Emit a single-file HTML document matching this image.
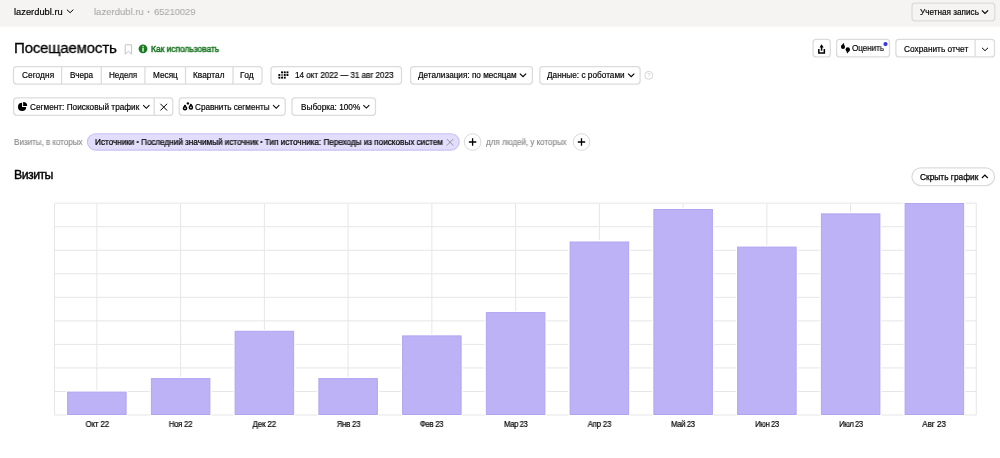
<!DOCTYPE html>
<html><head><meta charset="utf-8"><style>
html,body{margin:0;padding:0;background:#fff;width:1000px;height:458px;overflow:hidden;position:relative}
.t{position:absolute;white-space:nowrap;line-height:1;font-family:"Liberation Sans", sans-serif;will-change:transform;transform-origin:0 0}
.b{position:absolute}
</style></head><body>
<svg class="b" style="left:0;top:0" width="1000" height="458" viewBox="0 0 1000 458"><rect x="0" y="0" width="1000" height="26.7" fill="#f5f4f2"/><path d="M66.90 9.70 L70.10 12.70 L73.30 9.70" fill="none" stroke="#000" stroke-width="1.0"/><circle cx="148.5" cy="11.7" r="0.95" fill="#a9a9a9"/><rect x="912.00" y="3.00" width="82.80" height="17.80" rx="3" fill="#f5f4f2" stroke="#dbdbdb" stroke-width="1.25"/><path d="M981.90 10.40 L985.00 13.50 L988.10 10.40" fill="none" stroke="#000" stroke-width="1.15"/><g transform="translate(124.00,44.00)"><path d="M1.2 0.8 H7.6 V10.2 L4.4 7.3 L1.2 10.2 Z" fill="none" stroke="#c4c4c4" stroke-width="1"/></g><g transform="translate(138.50,44.30)"><circle cx="4.5" cy="4.5" r="4.4" fill="#1a7a22"/><rect x="3.9" y="3.7" width="1.3" height="3.6" fill="#fff"/><circle cx="4.55" cy="2.4" r="0.75" fill="#fff"/></g><rect x="813.10" y="39.40" width="17.20" height="17.50" rx="3" fill="#fff" stroke="#dbdbdb" stroke-width="1.25"/><g transform="translate(812.00,38.00)"><path d="M6.85 10.9 V14.95 H12.35 V10.9" fill="none" stroke="#000" stroke-width="1.5"/><path d="M9.6 9 V12.7" stroke="#000" stroke-width="1.5"/><path d="M9.6 6.2 L7.5 9.6 H11.7 Z" fill="#000"/></g><rect x="836.60" y="39.40" width="52.90" height="17.50" rx="3" fill="#fff" stroke="#dbdbdb" stroke-width="1.25"/><g transform="translate(838.00,41.00)"><circle cx="5" cy="5.9" r="2.05" fill="#000"/><path d="M3.1 5.2 L5.5 2.0 L6.3 3.0 L5.6 4.3 Z" fill="#000"/><circle cx="9.8" cy="8.5" r="2.2" fill="#000"/><path d="M12.0 8.6 L9.4 12.5 L8.6 11.6 L9.4 10.2 Z" fill="#000"/></g><circle cx="885.5" cy="44.1" r="2.1" fill="#3737e6"/><rect x="895.90" y="39.40" width="98.60" height="17.50" rx="3" fill="#fff" stroke="#dbdbdb" stroke-width="1.25"/><rect x="974.48" y="39.40" width="1.25" height="17.50" fill="#dbdbdb"/><path d="M982.00 47.80 L985.00 50.70 L988.00 47.80" fill="none" stroke="#000" stroke-width="1.0"/><rect x="13.50" y="66.60" width="248.50" height="17.40" rx="3" fill="#fff" stroke="#dbdbdb" stroke-width="1.25"/><rect x="60.98" y="66.60" width="1.25" height="17.40" fill="#dbdbdb"/><rect x="100.67" y="66.60" width="1.25" height="17.40" fill="#dbdbdb"/><rect x="144.28" y="66.60" width="1.25" height="17.40" fill="#dbdbdb"/><rect x="184.88" y="66.60" width="1.25" height="17.40" fill="#dbdbdb"/><rect x="232.38" y="66.60" width="1.25" height="17.40" fill="#dbdbdb"/><rect x="271.00" y="66.60" width="130.50" height="17.40" rx="3" fill="#fff" stroke="#dbdbdb" stroke-width="1.25"/><g transform="translate(278.40,71.40)"><rect x="2.70" y="0.00" width="1.9" height="1.9" fill="#000" opacity="1"/><rect x="5.40" y="0.00" width="1.9" height="1.9" fill="#000" opacity="1"/><rect x="8.10" y="0.00" width="1.9" height="1.9" fill="#000" opacity="1"/><rect x="0.00" y="2.65" width="1.9" height="1.9" fill="#000" opacity="1"/><rect x="2.70" y="2.65" width="1.9" height="1.9" fill="#000" opacity="0.55"/><rect x="5.40" y="2.65" width="1.9" height="1.9" fill="#000" opacity="1"/><rect x="8.10" y="2.65" width="1.9" height="1.9" fill="#000" opacity="1"/><rect x="0.00" y="5.30" width="1.9" height="1.9" fill="#000" opacity="1"/><rect x="2.70" y="5.30" width="1.9" height="1.9" fill="#000" opacity="1"/><rect x="5.40" y="5.30" width="1.9" height="1.9" fill="#000" opacity="1"/></g><rect x="410.60" y="66.60" width="121.80" height="17.40" rx="3" fill="#fff" stroke="#dbdbdb" stroke-width="1.25"/><path d="M519.90 73.60 L523.00 76.70 L526.10 73.60" fill="none" stroke="#000" stroke-width="1.15"/><rect x="539.80" y="66.60" width="100.30" height="17.40" rx="3" fill="#fff" stroke="#dbdbdb" stroke-width="1.25"/><path d="M628.10 73.60 L631.20 76.70 L634.30 73.60" fill="none" stroke="#000" stroke-width="1.15"/><g transform="translate(644.00,70.50)"><circle cx="4.8" cy="4.8" r="4" fill="none" stroke="#d0d0d0" stroke-width="0.9"/><text x="4.8" y="6.9" font-size="5.5" text-anchor="middle" fill="#c8c8c8" font-family="Liberation Sans">?</text></g><rect x="13.70" y="97.90" width="159.10" height="17.40" rx="3" fill="#fff" stroke="#dbdbdb" stroke-width="1.25"/><rect x="153.57" y="97.90" width="1.25" height="17.40" fill="#dbdbdb"/><g transform="translate(17.00,101.00)"><path d="M5.1 1.8 V5.9 H9.2 A4.1 4.1 0 1 1 5.1 1.8 Z" fill="#000"/><path d="M6.1 0.95 A4.1 4.1 0 0 1 10.2 5.05 H6.1 Z" fill="#000"/></g><path d="M143.20 105.20 L146.30 108.30 L149.40 105.20" fill="none" stroke="#000" stroke-width="1.05"/><g transform="translate(159.00,102.50)"><path d="M1.4 1.3 L8.1 8.0 M8.1 1.3 L1.4 8.0" stroke="#000" stroke-width="1"/></g><rect x="179.20" y="97.90" width="106.00" height="17.40" rx="3" fill="#fff" stroke="#dbdbdb" stroke-width="1.25"/><g transform="translate(182.00,101.00)"><circle cx="3" cy="7.3" r="1.55" fill="none" stroke="#000" stroke-width="1.5"/><circle cx="8.9" cy="6.4" r="1.55" fill="none" stroke="#000" stroke-width="1.5"/><circle cx="3" cy="4.8" r="1.05" fill="#000"/><circle cx="8.9" cy="3.9" r="1.05" fill="#000"/><circle cx="5.9" cy="2.4" r="1.2" fill="#000"/></g><path d="M273.10 105.20 L276.20 108.30 L279.30 105.20" fill="none" stroke="#000" stroke-width="1.05"/><rect x="292.00" y="97.90" width="83.50" height="17.40" rx="3" fill="#fff" stroke="#dbdbdb" stroke-width="1.25"/><path d="M363.40 105.20 L366.35 108.10 L369.30 105.20" fill="none" stroke="#000" stroke-width="1.05"/><rect x="87.40" y="133.70" width="371.80" height="16.40" rx="8.2" fill="#e1ddfb" stroke="#c9c1f5" stroke-width="1.1"/><g transform="translate(446.30,138.50)"><path d="M0.5 0.5 L7 7 M7 0.5 L0.5 7" stroke="#8c8c9c" stroke-width="0.9"/></g><g transform="translate(463.60,133.00)"><circle cx="9" cy="9" r="8.3" fill="#fff" stroke="#d9d9d9" stroke-width="1"/><path d="M9 5.3 V12.7 M5.3 9 H12.7" stroke="#000" stroke-width="1.3"/></g><g transform="translate(572.50,133.00)"><circle cx="9" cy="9" r="8.3" fill="#fff" stroke="#d9d9d9" stroke-width="1"/><path d="M9 5.3 V12.7 M5.3 9 H12.7" stroke="#000" stroke-width="1.3"/></g><rect x="911.90" y="167.80" width="82.70" height="17.80" rx="8.9" fill="#fff" stroke="#dbdbdb" stroke-width="1.25"/><path d="M981.90 178.00 L984.85 175.00 L987.80 178.00" fill="none" stroke="#000" stroke-width="1.15"/><line x1="54.5" x2="976.25" y1="203.20" y2="203.20" stroke="#e6e6e6" stroke-width="1"/><line x1="54.5" x2="976.25" y1="226.73" y2="226.73" stroke="#e6e6e6" stroke-width="1"/><line x1="54.5" x2="976.25" y1="250.27" y2="250.27" stroke="#e6e6e6" stroke-width="1"/><line x1="54.5" x2="976.25" y1="273.80" y2="273.80" stroke="#e6e6e6" stroke-width="1"/><line x1="54.5" x2="976.25" y1="297.33" y2="297.33" stroke="#e6e6e6" stroke-width="1"/><line x1="54.5" x2="976.25" y1="320.87" y2="320.87" stroke="#e6e6e6" stroke-width="1"/><line x1="54.5" x2="976.25" y1="344.40" y2="344.40" stroke="#e6e6e6" stroke-width="1"/><line x1="54.5" x2="976.25" y1="367.93" y2="367.93" stroke="#e6e6e6" stroke-width="1"/><line x1="54.5" x2="976.25" y1="391.47" y2="391.47" stroke="#e6e6e6" stroke-width="1"/><line x1="54.5" x2="976.25" y1="415.00" y2="415.00" stroke="#e6e6e6" stroke-width="1"/><line x1="96.88" x2="96.88" y1="203.2" y2="415.0" stroke="#e6e6e6" stroke-width="1"/><line x1="180.62" x2="180.62" y1="203.2" y2="415.0" stroke="#e6e6e6" stroke-width="1"/><line x1="264.38" x2="264.38" y1="203.2" y2="415.0" stroke="#e6e6e6" stroke-width="1"/><line x1="348.12" x2="348.12" y1="203.2" y2="415.0" stroke="#e6e6e6" stroke-width="1"/><line x1="431.88" x2="431.88" y1="203.2" y2="415.0" stroke="#e6e6e6" stroke-width="1"/><line x1="515.62" x2="515.62" y1="203.2" y2="415.0" stroke="#e6e6e6" stroke-width="1"/><line x1="599.38" x2="599.38" y1="203.2" y2="415.0" stroke="#e6e6e6" stroke-width="1"/><line x1="683.12" x2="683.12" y1="203.2" y2="415.0" stroke="#e6e6e6" stroke-width="1"/><line x1="766.88" x2="766.88" y1="203.2" y2="415.0" stroke="#e6e6e6" stroke-width="1"/><line x1="850.62" x2="850.62" y1="203.2" y2="415.0" stroke="#e6e6e6" stroke-width="1"/><line x1="934.38" x2="934.38" y1="203.2" y2="415.0" stroke="#e6e6e6" stroke-width="1"/><line x1="54.5" x2="54.5" y1="203.2" y2="415.0" stroke="#e6e6e6" stroke-width="1"/><line x1="976.25" x2="976.25" y1="203.2" y2="415.0" stroke="#e6e6e6" stroke-width="1"/><rect x="67.12" y="391.6" width="59.5" height="23.40" fill="#bdb2f5" stroke="#fff" stroke-width="2.4"/><rect x="67.62" y="392.1" width="58.5" height="22.40" fill="#bdb2f5" stroke="#b1a5f3" stroke-width="1"/><rect x="150.88" y="378.1" width="59.5" height="36.90" fill="#bdb2f5" stroke="#fff" stroke-width="2.4"/><rect x="151.38" y="378.6" width="58.5" height="35.90" fill="#bdb2f5" stroke="#b1a5f3" stroke-width="1"/><rect x="234.62" y="330.8" width="59.5" height="84.20" fill="#bdb2f5" stroke="#fff" stroke-width="2.4"/><rect x="235.12" y="331.3" width="58.5" height="83.20" fill="#bdb2f5" stroke="#b1a5f3" stroke-width="1"/><rect x="318.38" y="378.1" width="59.5" height="36.90" fill="#bdb2f5" stroke="#fff" stroke-width="2.4"/><rect x="318.88" y="378.6" width="58.5" height="35.90" fill="#bdb2f5" stroke="#b1a5f3" stroke-width="1"/><rect x="402.12" y="335.4" width="59.5" height="79.60" fill="#bdb2f5" stroke="#fff" stroke-width="2.4"/><rect x="402.62" y="335.9" width="58.5" height="78.60" fill="#bdb2f5" stroke="#b1a5f3" stroke-width="1"/><rect x="485.88" y="312.1" width="59.5" height="102.90" fill="#bdb2f5" stroke="#fff" stroke-width="2.4"/><rect x="486.38" y="312.6" width="58.5" height="101.90" fill="#bdb2f5" stroke="#b1a5f3" stroke-width="1"/><rect x="569.62" y="241.5" width="59.5" height="173.50" fill="#bdb2f5" stroke="#fff" stroke-width="2.4"/><rect x="570.12" y="242.0" width="58.5" height="172.50" fill="#bdb2f5" stroke="#b1a5f3" stroke-width="1"/><rect x="653.38" y="209.0" width="59.5" height="206.00" fill="#bdb2f5" stroke="#fff" stroke-width="2.4"/><rect x="653.88" y="209.5" width="58.5" height="205.00" fill="#bdb2f5" stroke="#b1a5f3" stroke-width="1"/><rect x="737.12" y="246.6" width="59.5" height="168.40" fill="#bdb2f5" stroke="#fff" stroke-width="2.4"/><rect x="737.62" y="247.1" width="58.5" height="167.40" fill="#bdb2f5" stroke="#b1a5f3" stroke-width="1"/><rect x="820.88" y="213.4" width="59.5" height="201.60" fill="#bdb2f5" stroke="#fff" stroke-width="2.4"/><rect x="821.38" y="213.9" width="58.5" height="200.60" fill="#bdb2f5" stroke="#b1a5f3" stroke-width="1"/><rect x="904.62" y="203" width="59.5" height="212.00" fill="#bdb2f5" stroke="#fff" stroke-width="2.4"/><rect x="905.12" y="203.5" width="58.5" height="211.00" fill="#bdb2f5" stroke="#b1a5f3" stroke-width="1"/></svg>
<div class="t" style="left:14.00px;top:7.53px;font-size:9.3px;color:#000;font-weight:400;-webkit-text-stroke-width:0.18px;letter-spacing:0.005px;transform:scaleX(1.0013)">lazerdubl.ru</div>
<div class="t" style="left:93.60px;top:7.27px;font-size:9.6px;color:#a9a9a9;font-weight:400;-webkit-text-stroke-width:0.08px;letter-spacing:-0.018px;transform:scaleX(0.9956)">lazerdubl.ru</div>
<div class="t" style="left:153.60px;top:7.10px;font-size:9.8px;color:#a9a9a9;font-weight:400;-webkit-text-stroke-width:0.08px;letter-spacing:-0.137px;transform:scaleX(0.9742)">65210029</div>
<div class="t" style="left:920.00px;top:8.66px;font-size:8.2px;color:#000;font-weight:400;-webkit-text-stroke-width:0.18px;letter-spacing:0.001px;transform:scaleX(1.0003)">Учетная запись</div>
<div class="t" style="left:14.40px;top:39.53px;font-size:15.2px;color:#000;font-weight:400;-webkit-text-stroke-width:0.3px;letter-spacing:-0.207px;transform:scaleX(0.9897)">Посещаемость</div>
<div class="t" style="left:150.80px;top:45.32px;font-size:8.6px;color:#187520;font-weight:400;-webkit-text-stroke-width:0.45px;letter-spacing:-0.052px;transform:scaleX(0.9879)">Как использовать</div>
<div class="t" style="left:852.20px;top:44.66px;font-size:8.2px;color:#000;font-weight:400;-webkit-text-stroke-width:0.18px;letter-spacing:-0.053px;transform:scaleX(0.9885)">Оценить</div>
<div class="t" style="left:903.50px;top:44.57px;font-size:8.3px;color:#000;font-weight:400;-webkit-text-stroke-width:0.18px;letter-spacing:-0.001px;transform:scaleX(0.9997)">Сохранить отчет</div>
<div class="t" style="left:21.70px;top:72.26px;font-size:8.2px;color:#000;font-weight:400;-webkit-text-stroke-width:0.18px;letter-spacing:0.058px;transform:scaleX(1.0127)">Сегодня</div>
<div class="t" style="left:69.60px;top:72.26px;font-size:8.2px;color:#000;font-weight:400;-webkit-text-stroke-width:0.18px;letter-spacing:-0.002px;transform:scaleX(0.9995)">Вчера</div>
<div class="t" style="left:109.00px;top:72.26px;font-size:8.2px;color:#000;font-weight:400;-webkit-text-stroke-width:0.18px;letter-spacing:-0.047px;transform:scaleX(0.9901)">Неделя</div>
<div class="t" style="left:152.60px;top:72.26px;font-size:8.2px;color:#000;font-weight:400;-webkit-text-stroke-width:0.18px;letter-spacing:0.011px;transform:scaleX(1.0023)">Месяц</div>
<div class="t" style="left:193.00px;top:72.26px;font-size:8.2px;color:#000;font-weight:400;-webkit-text-stroke-width:0.18px;letter-spacing:0.046px;transform:scaleX(1.0103)">Квартал</div>
<div class="t" style="left:240.40px;top:72.26px;font-size:8.2px;color:#000;font-weight:400;-webkit-text-stroke-width:0.18px;letter-spacing:0.142px;transform:scaleX(1.0317)">Год</div>
<div class="t" style="left:295.00px;top:72.26px;font-size:8.2px;color:#000;font-weight:400;-webkit-text-stroke-width:0.18px;letter-spacing:-0.037px;transform:scaleX(0.9906)">14 окт 2022 — 31 авг 2023</div>
<div class="t" style="left:418.30px;top:72.26px;font-size:8.2px;color:#000;font-weight:400;-webkit-text-stroke-width:0.18px;letter-spacing:-0.002px;transform:scaleX(0.9995)">Детализация: по месяцам</div>
<div class="t" style="left:547.00px;top:72.26px;font-size:8.2px;color:#000;font-weight:400;-webkit-text-stroke-width:0.18px;letter-spacing:0.017px;transform:scaleX(1.0039)">Данные: с роботами</div>
<div class="t" style="left:29.70px;top:103.96px;font-size:8.2px;color:#000;font-weight:400;-webkit-text-stroke-width:0.18px;letter-spacing:0.013px;transform:scaleX(1.0031)">Сегмент: Поисковый трафик</div>
<div class="t" style="left:195.00px;top:103.96px;font-size:8.2px;color:#000;font-weight:400;-webkit-text-stroke-width:0.18px;letter-spacing:-0.007px;transform:scaleX(0.9984)">Сравнить сегменты</div>
<div class="t" style="left:300.60px;top:103.96px;font-size:8.2px;color:#000;font-weight:400;-webkit-text-stroke-width:0.18px;letter-spacing:0.009px;transform:scaleX(1.0021)">Выборка: 100%</div>
<div class="t" style="left:13.80px;top:137.57px;font-size:8.3px;color:#8a8a8a;font-weight:400;-webkit-text-stroke-width:0.14px;letter-spacing:-0.071px;transform:scaleX(0.9827)">Визиты, в которых</div>
<div class="t" style="left:94.60px;top:137.77px;font-size:8.3px;color:#000;font-weight:400;-webkit-text-stroke-width:0.24px;letter-spacing:-0.041px;transform:scaleX(0.9900)">Источники <span style="font-size:6.5px;vertical-align:0.6px">•</span> Последний значимый источник <span style="font-size:6.5px;vertical-align:0.6px">•</span> Тип источника: Переходы из поисковых систем</div>
<div class="t" style="left:486.20px;top:137.57px;font-size:8.3px;color:#8a8a8a;font-weight:400;-webkit-text-stroke-width:0.14px;letter-spacing:-0.080px;transform:scaleX(0.9804)">для людей, у которых</div>
<div class="t" style="left:14.20px;top:168.89px;font-size:12.3px;color:#000;font-weight:400;-webkit-text-stroke-width:0.4px;letter-spacing:-0.519px;transform:scaleX(0.9911)">Визиты</div>
<div class="t" style="left:920.00px;top:172.77px;font-size:8.3px;color:#000;font-weight:400;-webkit-text-stroke-width:0.25px;letter-spacing:0.016px;transform:scaleX(1.0036)">Скрыть график</div>
<div class="t" style="left:84.62px;top:419.77px;font-size:8.3px;color:#000;font-weight:400;-webkit-text-stroke-width:0.2px;letter-spacing:-0.168px;transform-origin:50% 0;transform:scaleX(0.9589)">Окт 22</div>
<div class="t" style="left:168.09px;top:419.77px;font-size:8.3px;color:#000;font-weight:400;-webkit-text-stroke-width:0.2px;letter-spacing:-0.262px;transform-origin:50% 0;transform:scaleX(0.9374)">Ноя 22</div>
<div class="t" style="left:252.15px;top:419.77px;font-size:8.3px;color:#000;font-weight:400;-webkit-text-stroke-width:0.2px;letter-spacing:-0.159px;transform-origin:50% 0;transform:scaleX(0.9610)">Дек 22</div>
<div class="t" style="left:335.62px;top:419.77px;font-size:8.3px;color:#000;font-weight:400;-webkit-text-stroke-width:0.2px;letter-spacing:-0.251px;transform-origin:50% 0;transform:scaleX(0.9397)">Янв 23</div>
<div class="t" style="left:419.28px;top:419.77px;font-size:8.3px;color:#000;font-weight:400;-webkit-text-stroke-width:0.2px;letter-spacing:-0.281px;transform-origin:50% 0;transform:scaleX(0.9330)">Фев 23</div>
<div class="t" style="left:502.80px;top:419.77px;font-size:8.3px;color:#000;font-weight:400;-webkit-text-stroke-width:0.2px;letter-spacing:-0.357px;transform-origin:50% 0;transform:scaleX(0.9165)">Мар 23</div>
<div class="t" style="left:586.95px;top:419.77px;font-size:8.3px;color:#000;font-weight:400;-webkit-text-stroke-width:0.2px;letter-spacing:-0.224px;transform-origin:50% 0;transform:scaleX(0.9459)">Апр 23</div>
<div class="t" style="left:670.30px;top:419.77px;font-size:8.3px;color:#000;font-weight:400;-webkit-text-stroke-width:0.2px;letter-spacing:-0.358px;transform-origin:50% 0;transform:scaleX(0.9162)">Май 23</div>
<div class="t" style="left:753.92px;top:419.77px;font-size:8.3px;color:#000;font-weight:400;-webkit-text-stroke-width:0.2px;letter-spacing:-0.401px;transform-origin:50% 0;transform:scaleX(0.9071)">Июн 23</div>
<div class="t" style="left:837.65px;top:419.77px;font-size:8.3px;color:#000;font-weight:400;-webkit-text-stroke-width:0.2px;letter-spacing:-0.408px;transform-origin:50% 0;transform:scaleX(0.9058)">Июл 23</div>
<div class="t" style="left:922.37px;top:419.77px;font-size:8.3px;color:#000;font-weight:400;-webkit-text-stroke-width:0.2px;letter-spacing:-0.085px;transform-origin:50% 0;transform:scaleX(0.9788)">Авг 23</div>
</body></html>
